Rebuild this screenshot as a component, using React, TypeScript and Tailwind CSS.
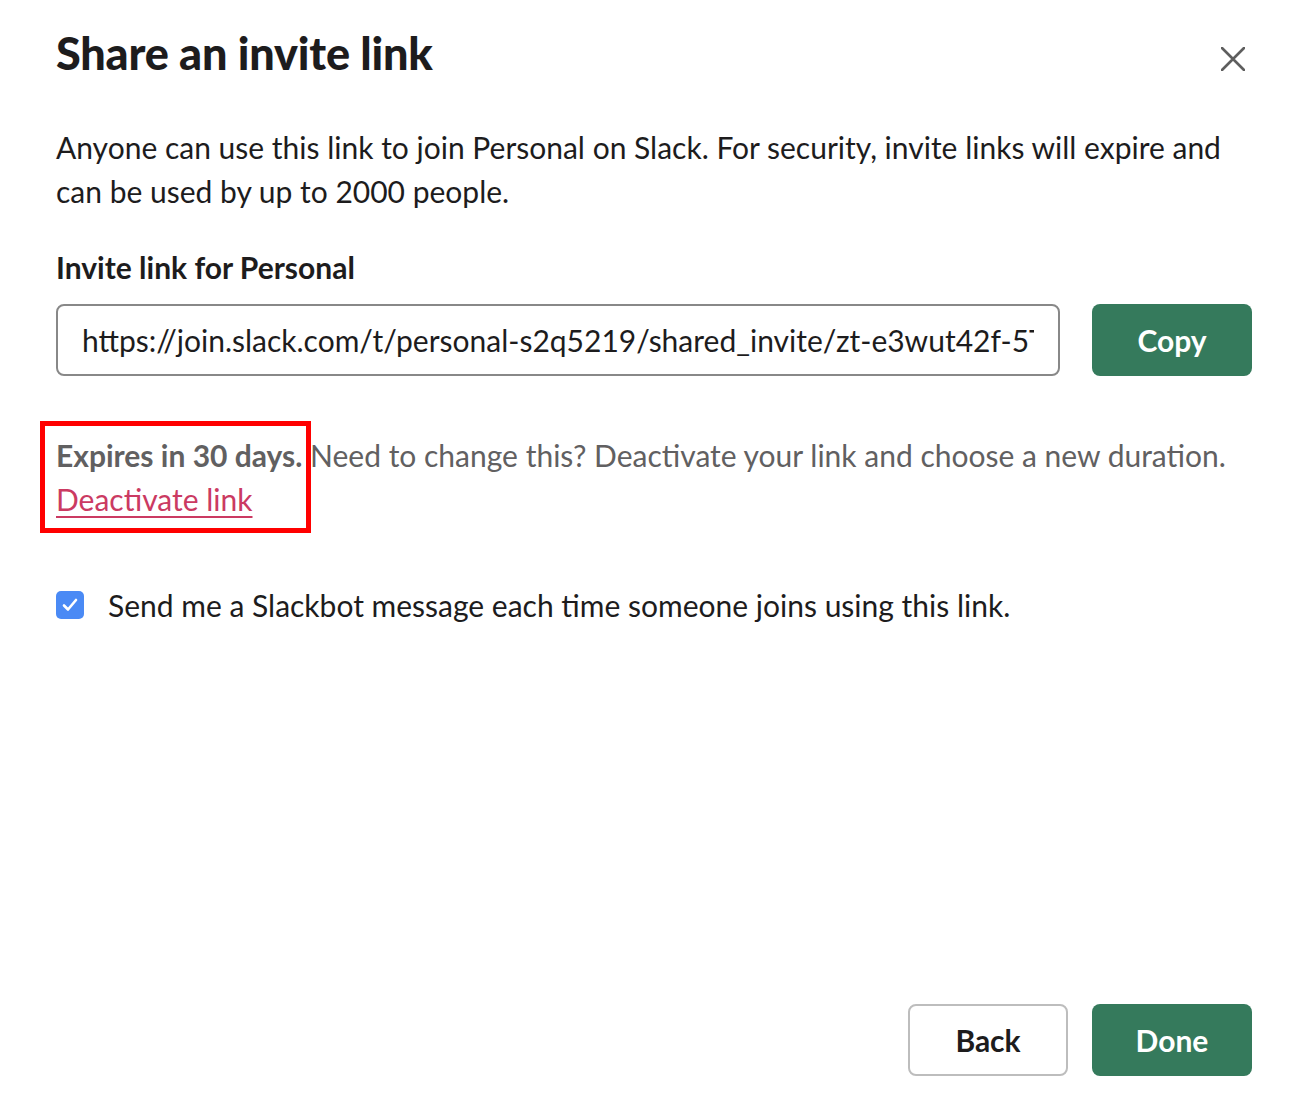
import { useState } from 'react'

const LINK = 'https://join.slack.com/t/personal-s2q5219/shared_invite/zt-e3wut42f-5TqLk8vWnR2xYpA0bHcD1g'

export default function App() {
  const [notify, setNotify] = useState(true)

  return (
    <div
      className="relative flex h-[1106px] w-[1308px] flex-col bg-white px-14 text-[#1d1c1d]"
      style={{ fontFamily: 'Lato, "Noto Sans", sans-serif' }}
    >
      {/* Header */}
      <div className="flex items-start justify-between pt-[27px]">
        <h1 className="text-[45px] font-black leading-[52px] tracking-[-0.2px]">Share an invite link</h1>
        <button className="mt-[20px] mr-[7px] text-[#5e5e5e]" aria-label="Close">
          <svg width="24" height="24" viewBox="0 0 24 24" fill="none">
            <path d="M1 1L23 23M23 1L1 23" stroke="currentColor" strokeWidth="2.6" strokeLinecap="round" />
          </svg>
        </button>
      </div>

      <p className="mt-[46px] text-[30px] leading-[44px]">
        Anyone can use this link to join Personal on Slack. For security, invite links will expire and can be used by up
        to 2000 people.
      </p>

      <label className="mt-[32px] text-[30px] font-bold leading-[44px]">Invite link for Personal</label>

      <div className="mt-[15px] flex items-center gap-8">
        <input
          readOnly
          value={LINK}
          className="h-[72px] flex-1 rounded-lg border-2 border-[#888888] bg-white px-6 text-[30px] text-[#1d1c1d] outline-none"
          style={{ fontFamily: 'Lato, "Noto Sans", sans-serif' }}
        />
        <button className="h-[72px] w-[160px] rounded-lg bg-[#357a5c] text-[30px] font-bold text-white">Copy</button>
      </div>

      {/* Expiry note */}
      <div className="relative mt-[57px] text-[30px] leading-[44px] text-[#616061]">
        <p>
          <span className="font-bold">Expires in 30 days.</span> Need to change this? Deactivate your link and choose a
          new duration.
        </p>
        <a href="#" className="text-[#cb3a62] underline decoration-2 underline-offset-[5px]">
          Deactivate link
        </a>
        <div className="pointer-events-none absolute -left-4 -top-3 h-[112px] w-[271px] border-[5px] border-[#ff0000]" />
      </div>

      {/* Slackbot option */}
      <label className="mt-[62px] flex cursor-pointer items-center gap-6 text-[30px] leading-[44px]">
        <button
          type="button"
          onClick={() => setNotify(!notify)}
          className={
            notify
              ? 'flex h-7 w-7 items-center justify-center rounded-[5px] bg-[#4a8af5]'
              : 'flex h-7 w-7 items-center justify-center rounded-[5px] border-2 border-[#8d8d8d] bg-white'
          }
        >
          {notify && (
            <svg width="20" height="20" viewBox="0 0 20 20" fill="none">
              <path d="M4 10.5L8 14.5L16 5" stroke="white" strokeWidth="2.6" strokeLinecap="round" strokeLinejoin="round" />
            </svg>
          )}
        </button>
        Send me a Slackbot message each time someone joins using this link.
      </label>

      {/* Footer */}
      <div className="mt-auto flex justify-end gap-6 pb-[30px]">
        <button className="h-[72px] w-[160px] rounded-lg border-2 border-[#bdbdbd] bg-white text-[30px] font-bold text-[#1d1c1d]">
          Back
        </button>
        <button className="h-[72px] w-[160px] rounded-lg bg-[#357a5c] text-[30px] font-bold text-white">Done</button>
      </div>
    </div>
  )
}
